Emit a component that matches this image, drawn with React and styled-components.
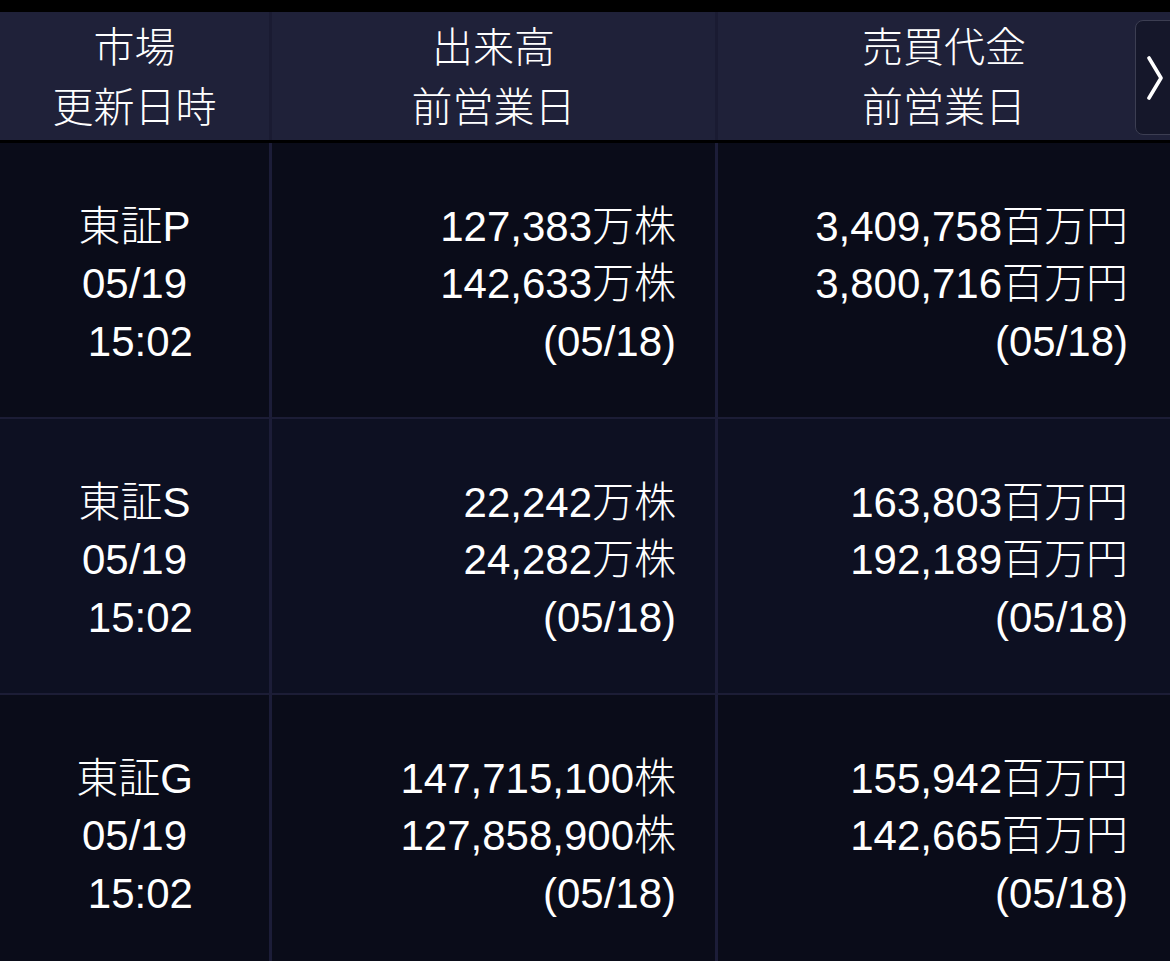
import React from 'react';
import styled, { createGlobalStyle } from 'styled-components';

const GlobalStyle = createGlobalStyle`
    html, body {
        margin: 0;
        padding: 0;
        background: #000;
        overflow: hidden;
    }
    body {
        font-family: "Liberation Sans", "Noto Sans CJK JP", sans-serif;
        color: #fff;
    }
`;

const Page = styled.div`
    width: 1170px;
    height: 961px;
    padding-top: 12px;
    box-sizing: border-box;
    background: #000;
    overflow: hidden;
`;

const Header = styled.div`
    position: relative;
    display: grid;
    grid-template-columns: 272px 446px 1fr;
    height: 128px;
    background: #1f2139;
    border-bottom: 3px solid #000;
`;

const HeadCell = styled.div`
    display: flex;
    flex-direction: column;
    align-items: center;
    justify-content: center;
    padding-top: 3px;
    font-size: 41px;
    font-weight: 300;
    line-height: 60px;
    border-right: ${p => (p.$last ? 'none' : '3px solid #1a1b32')};
`;

const NextButton = styled.div`
    position: absolute;
    top: 8px;
    left: 1135px;
    width: 48px;
    height: 115px;
    box-sizing: border-box;
    border: 1px solid #3c3e52;
    border-radius: 8px;
    background: #15172a;
    display: flex;
    align-items: center;
    padding-left: 10px;
`;

const Row = styled.div`
    display: grid;
    grid-template-columns: 272px 446px 1fr;
    height: 274px;
    background: ${p => (p.$alt ? '#0d1022' : '#0a0c19')};
    border-bottom: 2px solid #1c1d36;
`;

const Cell = styled.div`
    display: flex;
    flex-direction: column;
    justify-content: center;
    align-items: ${p => (p.$center ? 'center' : 'flex-end')};
    padding-right: ${p => p.$pad || 0}px;
    padding-top: 8px;
    font-size: 42px;
    font-weight: 300;
    line-height: 57.5px;
    white-space: pre;
    border-right: ${p => (p.$last ? 'none' : '3px solid #1c1d38')};
`;

const rows = [
    {
        market: '東証P',
        volume: ['127,383万株', '142,633万株'],
        value: ['3,409,758百万円', '3,800,716百万円'],
    },
    {
        market: '東証S',
        volume: ['22,242万株', '24,282万株'],
        value: ['163,803百万円', '192,189百万円'],
        alt: true,
    },
    {
        market: '東証G',
        volume: ['147,715,100株', '127,858,900株'],
        value: ['155,942百万円', '142,665百万円'],
    },
];

const App = () => {
    return (
        <Page>
            <GlobalStyle />
            <Header>
                <HeadCell>
                    <span>市場</span>
                    <span>更新日時</span>
                </HeadCell>
                <HeadCell>
                    <span>出来高</span>
                    <span>前営業日</span>
                </HeadCell>
                <HeadCell $last>
                    <span>売買代金</span>
                    <span>前営業日</span>
                </HeadCell>
                <NextButton>
                    <svg width="18" height="44" viewBox="0 0 18 44">
                        <path d="M3 2 L15 22 L3 42" fill="none" stroke="#fff" strokeWidth="3.6" strokeLinecap="round" strokeLinejoin="round" />
                    </svg>
                </NextButton>
            </Header>
            {rows.map(r => (
                <Row key={r.market} $alt={r.alt}>
                    <Cell $center>
                        <span>{r.market}</span>
                        <span>05/19</span>
                        <span>{' 15:02'}</span>
                    </Cell>
                    <Cell $pad={39}>
                        <span>{r.volume[0]}</span>
                        <span>{r.volume[1]}</span>
                        <span>(05/18)</span>
                    </Cell>
                    <Cell $pad={42} $last>
                        <span>{r.value[0]}</span>
                        <span>{r.value[1]}</span>
                        <span>(05/18)</span>
                    </Cell>
                </Row>
            ))}
        </Page>
    );
};

export default App;
